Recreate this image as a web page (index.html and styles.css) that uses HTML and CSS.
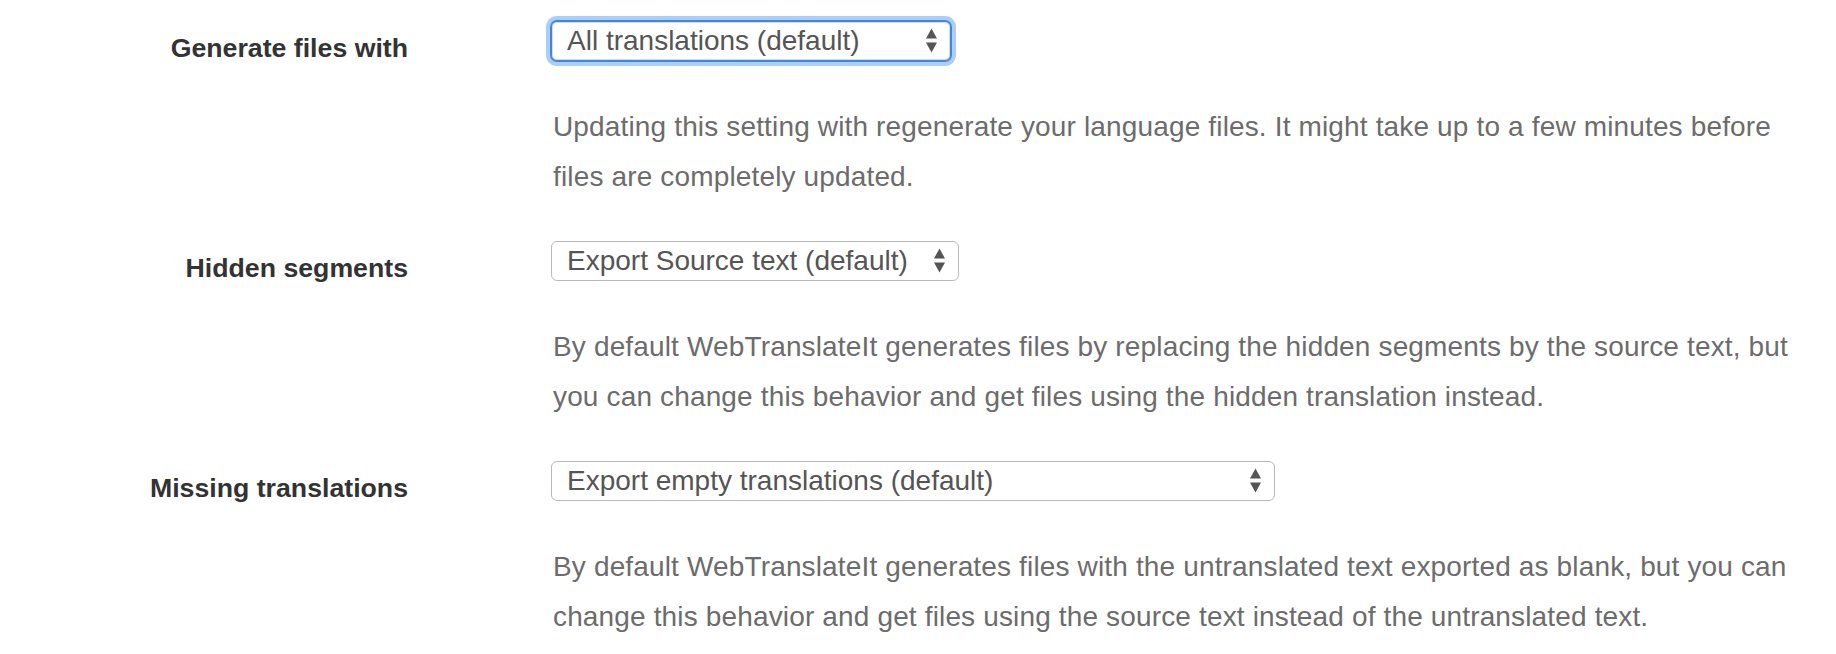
FILE: index.html
```html
<!DOCTYPE html>
<html>
<head>
  <link rel="stylesheet" href="styles.css">
</head>

<body>
  <form class="settings">
    <label class="setting-label" for="generate">Generate files with</label>
    <div class="setting-field">
      <span class="select-wrap">
        <select id="generate" class="select select-generate focused">
          <option>All translations (default)</option>
        </select>
        <svg class="select-arrows" width="13" height="26" viewBox="0 0 13 26"><path d="M6.5 0.5 L12 10.5 L1 10.5 Z M1 14.5 L12 14.5 L6.5 24.5 Z"/></svg>
      </span>
      <p class="setting-help">Updating this setting with regenerate your language files. It might take up to a few minutes before files are completely updated.</p>
    </div>

    <label class="setting-label" for="hidden">Hidden segments</label>
    <div class="setting-field">
      <span class="select-wrap">
        <select id="hidden" class="select select-hidden">
          <option>Export Source text (default)</option>
        </select>
        <svg class="select-arrows" width="13" height="26" viewBox="0 0 13 26"><path d="M6.5 0.5 L12 10.5 L1 10.5 Z M1 14.5 L12 14.5 L6.5 24.5 Z"/></svg>
      </span>
      <p class="setting-help">By default WebTranslateIt generates files by replacing the hidden segments by the source text, but you can change this behavior and get files using the hidden translation instead.</p>
    </div>

    <label class="setting-label" for="missing">Missing translations</label>
    <div class="setting-field">
      <span class="select-wrap">
        <select id="missing" class="select select-missing">
          <option>Export empty translations (default)</option>
        </select>
        <svg class="select-arrows" width="13" height="26" viewBox="0 0 13 26"><path d="M6.5 0.5 L12 10.5 L1 10.5 Z M1 14.5 L12 14.5 L6.5 24.5 Z"/></svg>
      </span>
      <p class="setting-help">By default WebTranslateIt generates files with the untranslated text exported as blank, but you can change this behavior and get files using the source text instead of the untranslated text.</p>
    </div>
  </form>
</body>
</html>
```

FILE: styles.css
```css
body {
  margin: 0;
  background: #fff;
  font-family: "Liberation Sans", Arial, sans-serif;
}

.settings {
  display: grid;
  grid-template-columns: 408px 1fr;
  column-gap: 143px;
  row-gap: 39px;
  padding: 21px 20px 0 0;
}

.setting-label {
  text-align: right;
  font-size: 26.7px;
  font-weight: bold;
  line-height: 40px;
  padding-top: 7px;
  color: #333;
}

.setting-field {
  min-width: 0;
}

.select-wrap {
  position: relative;
  display: inline-block;
  vertical-align: top;
}

.select {
  -webkit-appearance: none;
  appearance: none;
  display: block;
  box-sizing: border-box;
  height: 40px;
  margin: 0;
  padding: 0 46px 0 15px;
  font-family: "Liberation Sans", Arial, sans-serif;
  font-size: 28px;
  line-height: 38px;
  color: #555;
  background: #fff;
  border: 1px solid #b9b9b9;
  border-radius: 6px;
  outline: none;
}

/* focus ring like the browser draws it */
.select.focused {
  border-color: #4a84d4;
  box-shadow: 0 0 0 1px #4a84d4, 0 0 0 5px #a9cff8, inset 0 0 0 1px #c9def6;
}

.select-generate {
  width: 400px;
}

.select-hidden {
  width: 408px;
}

.select-missing {
  width: 724px;
}

.select-arrows {
  position: absolute;
  right: 13px;
  top: 7px;
  fill: #555;
  pointer-events: none;
}

.setting-help {
  margin: 41px 0 0 2px;
  font-size: 28px;
  line-height: 50px;
  letter-spacing: 0.15px;
  color: #6c6c6c;
}
```
